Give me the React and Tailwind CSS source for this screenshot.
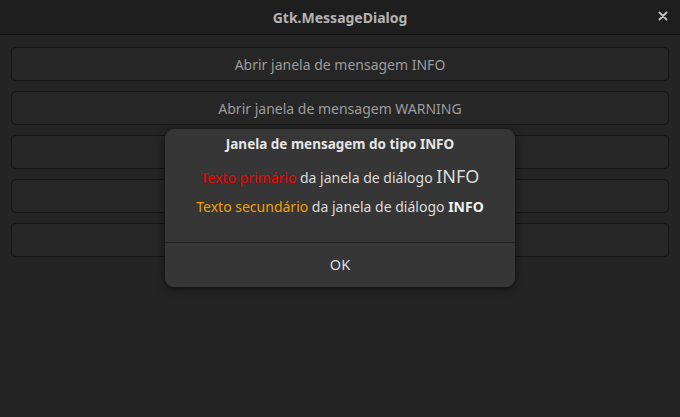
import React from 'react';

const buttons = [
  'Abrir janela de mensagem INFO',
  'Abrir janela de mensagem WARNING',
  '',
  '',
  '',
];

const MessageDialog = () => {
  return (
    <div className="absolute left-[165px] top-[129px] w-[350px] rounded-[9px] bg-[#363636] shadow-[0_2px_8px_rgba(0,0,0,0.6)] flex flex-col overflow-hidden">
      <div className="flex flex-col items-center px-4 pt-[5px] pb-[14px]">
        <div className="text-[13.5px] font-bold text-[#e6e6e6] leading-[20px]">
          Janela de mensagem do tipo INFO
        </div>
        <div className="mt-[11px] text-[14px] text-[#dcdcdc] leading-[22px]">
          <span className="text-[#ee0000]">Texto primário</span> da janela de diálogo{' '}
          <span className="text-[18px]">INFO</span>
        </div>
        <div className="mt-[7px] text-[14px] text-[#dcdcdc] leading-[22px]">
          <span className="text-[#f0a000]">Texto secundário</span> da janela de diálogo{' '}
          <b className="font-bold text-[#f0f0f0]">INFO</b>
        </div>
      </div>
      <div className="mt-[10px] border-t border-[#242424] h-[45px] flex items-center justify-center text-[14.5px] text-[#dedede]">
        OK
      </div>
    </div>
  );
};

export default function App() {
  return (
    <div
      className="relative w-[680px] h-[417px] bg-[#242424] overflow-hidden"
      style={{ fontFamily: '"Noto Sans", "Open Sans", sans-serif' }}
    >
      <div className="h-[35px] bg-[#1e1e1e] border-b border-[#111111] flex items-center justify-center relative">
        <span className="text-[14px] font-bold text-[#b4b4b4]">Gtk.MessageDialog</span>
        <span className="absolute right-[9px] top-[8px] text-[#bdbdbd]">
          <svg width="16" height="16" viewBox="0 0 16 16">
            <path d="M4.5 4.5 L11.5 11.5 M11.5 4.5 L4.5 11.5" stroke="currentColor" strokeWidth="2" strokeLinecap="round" />
          </svg>
        </span>
      </div>
      <div className="flex flex-col gap-[10px] px-[11px] pt-[12px]">
        {buttons.map((label, i) => (
          <div
            key={i}
            className="h-[34px] rounded-[5px] bg-[#262626] border border-[#161616] flex items-center justify-center text-[14px] text-[#9c9c9c]"
          >
            {label}
          </div>
        ))}
      </div>
      <MessageDialog />
    </div>
  );
}
